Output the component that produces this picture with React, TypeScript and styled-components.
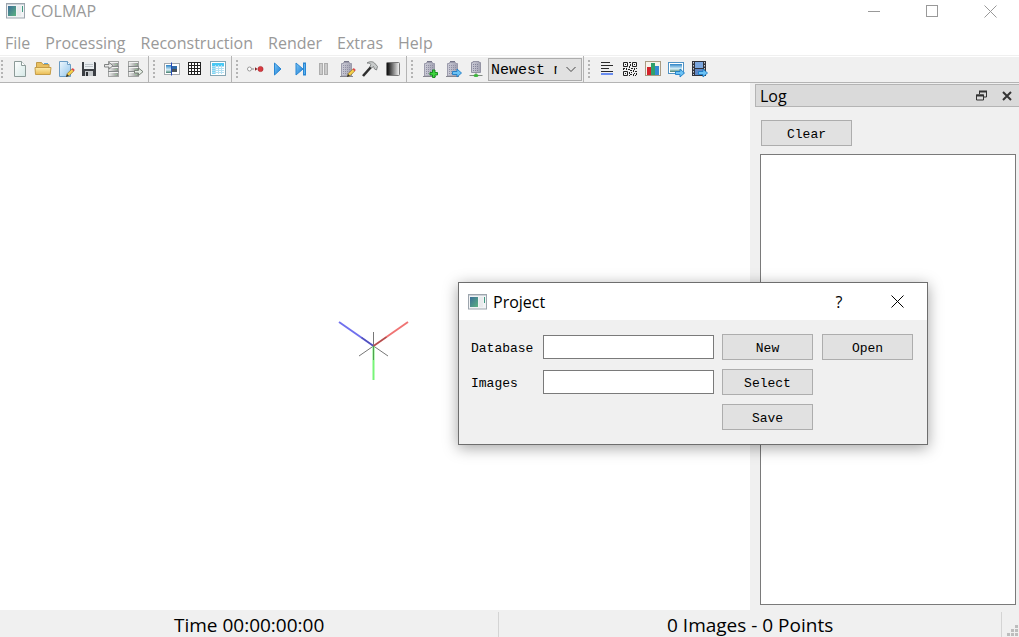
import React from "react";
import styled, { createGlobalStyle } from "styled-components";

const UI = `"Open Sans", "Noto Sans", sans-serif`;
const MONO = `"Liberation Mono", monospace`;

const GlobalStyle = createGlobalStyle`
  * { box-sizing: border-box; }
  html, body { margin: 0; padding: 0; background: #fff; }
  body { font-family: ${UI}; color: #000; }
  button, input, textarea, select { font: inherit; color: inherit; margin: 0; }
  svg { display: block; }
`;

const Window = styled.div`
  min-height: 100vh;
  display: flex;
  flex-direction: column;
  background: #fff;
`;

const TitleBar = styled.header`
  display: flex;
  align-items: center;
  height: 22px;
  margin-bottom: 10px;
  padding-left: 6px;
  gap: 6px;
  color: #999;
`;

const Title = styled.h1`
  flex: 1;
  margin: 0;
  font: 400 16px/22px ${UI};
`;

const CaptionGroup = styled.div`
  display: flex;
  align-self: stretch;
`;

const CaptionButton = styled.button`
  width: 58px;
  padding: 0;
  border: 0;
  background: none;
  display: flex;
  align-items: center;
  justify-content: center;
  font-size: 16px;
`;

const MenuBar = styled.nav`
  display: flex;
  gap: 15px;
  height: 23px;
  padding-left: 5px;
  color: #999;
`;

const MenuItem = styled.button`
  padding: 0;
  border: 0;
  background: none;
  font-size: 16px;
  line-height: 23px;
`;

const ToolArea = styled.div`
  display: flex;
  height: 28px;
  border-top: 1px solid #f0f0f0;
  border-bottom: 1px solid #b4b4b4;
  background: #f0f0f0;
  box-shadow: inset 0 1px #fff;
`;

const ToolGroup = styled.div<{ $first?: boolean; $last?: boolean }>`
  display: flex;
  align-items: center;
  padding: 0 2px 0 ${(p) => (p.$first ? 1 : 4)}px;
  border-right: ${(p) => (p.$last ? "0" : "1px solid #b4b4b4")};
`;

const Handle = styled.span`
  width: 7px;
  height: 18px;
  background:
    linear-gradient(#b4b4b4, #b4b4b4) 0 0 / 2px 18px no-repeat;
  mask: repeating-linear-gradient(#000 0 2px, transparent 2px 4px);
`;

const ToolButton = styled.button`
  width: 23px;
  height: 24px;
  padding: 0;
  border: 0;
  background: none;
  display: flex;
  align-items: center;
  justify-content: center;
`;

const ModelPicker = styled.label`
  position: relative;
  margin: 1px -1px 0 1px;
  svg {
    position: absolute;
    right: 6px;
    top: 8px;
    pointer-events: none;
  }
`;

const ModelSelect = styled.select`
  display: block;
  appearance: none;
  width: 94px;
  height: 23px;
  padding: 2px 24px 0 2px;
  border: 1px solid #adadad;
  border-radius: 0;
  background: #e1e1e1;
  font: 15px/19px ${MONO};
  text-overflow: clip;
`;

const Main = styled.main`
  flex: 1;
  display: flex;
`;

const Canvas = styled.section`
  flex: 1;
  display: flex;
  align-items: center;
  justify-content: center;
`;

const Dock = styled.aside`
  width: 269px;
  display: flex;
  flex-direction: column;
  padding: 1px 0 5px 5px;
  background: #f0f0f0;
`;

const DockTitle = styled.div`
  display: flex;
  align-items: center;
  height: 23px;
  padding-left: 4px;
  border: 1px solid #b4b4b4;
  border-right: 0;
  background: #dadada;
`;

const DockHeading = styled.h2`
  flex: 1;
  margin: 0;
  font: 400 16px/24px ${UI};
`;

const DockButton = styled.button`
  width: 25px;
  height: 20px;
  padding: 0;
  border: 0;
  background: none;
  display: flex;
  align-items: center;
  justify-content: center;
`;

const DockBody = styled.div`
  flex: 1;
  display: flex;
  flex-direction: column;
  align-items: flex-start;
  gap: 8px;
  padding: 13px 3px 0 5px;
`;

const PushButton = styled.button<{ $indent?: boolean }>`
  width: 91px;
  height: 26px;
  margin-left: ${(p) => (p.$indent ? 1 : 0)}px;
  padding: 4px 0 0;
  border: 1px solid #adadad;
  background: #e1e1e1;
  font: 13px/20px ${MONO};
`;

const LogText = styled.textarea`
  flex: 1;
  width: 100%;
  border: 1px solid #7a7a7a;
  background: #fff;
  resize: none;
  outline: 0;
  font: 13px/16px ${MONO};
`;

const StatusBar = styled.footer`
  display: flex;
  height: 27px;
  padding-top: 2px;
  background: #f0f0f0;
`;

const StatusCell = styled.div<{ $basis?: string }>`
  flex: ${(p) => (p.$basis ? `0 0 ${p.$basis}` : "1")};
  border-right: 1px solid #d4d4d4;
  text-align: center;
  font-size: 19px;
  line-height: 26px;
`;

const Grip = styled.div`
  width: 17px;
  display: flex;
  align-items: flex-end;
  justify-content: flex-end;
`;

const DialogWindow = styled.div`
  position: absolute;
  left: 458px;
  top: 282px;
  border: 1px solid #6e6e6e;
  background: #f0f0f0;
  box-shadow: 0 3px 14px rgba(0, 0, 0, 0.36);
`;

const DialogTitle = styled.div`
  display: flex;
  align-items: center;
  height: 37px;
  padding: 0 1px 0 9px;
  gap: 6px;
  background: #fff;
`;

const DialogHeading = styled.h2`
  flex: 1;
  margin: 0;
  font: 400 16px/22px ${UI};
`;

const ProjectForm = styled.form`
  display: grid;
  grid-template-columns: 64px 171px 92px 91px;
  gap: 9px 8px;
  align-items: center;
  padding: 14px 14px 14px 12px;
`;

const FieldLabel = styled.label`
  padding-top: 4px;
  font: 13px/20px ${MONO};
`;

const TextBox = styled.input`
  width: 100%;
  height: 24px;
  border: 1px solid #7a7a7a;
  background: #fff;
  padding: 0 4px;
  outline: 0;
  font: 13px/20px ${MONO};
`;

const SaveSlot = styled.div`
  grid-column: 3;
`;

const AppIcon = () => (
  <svg width="19" height="16" viewBox="0 0 19 16" aria-hidden="true">
    <rect x=".5" y=".5" width="18" height="14.5" fill="#f1f3f5" stroke="#9da5ad" />
    <rect x="2" y="3" width="8" height="10" fill="url(#appFill)" />
    <rect x="11" y="3" width="4" height="10" fill="#e9ebed" />
    <rect x="16" y="3" width="1" height="6" fill="#3f9a80" />
    <path d="M1 1.5H18" stroke="#cdd3d9" />
  </svg>
);

const Cross = () => (
  <svg width="13" height="13" viewBox="0 0 13 13" aria-hidden="true">
    <path d="M.5 .5l12 12M12.5 .5l-12 12" stroke="currentColor" fill="none" />
  </svg>
);

const Gradients = () => (
  <svg width="0" height="0" style={{ position: "absolute" }} aria-hidden="true">
    <defs>
      <linearGradient id="appFill" x1="0" y1="0" x2="1" y2="1">
        <stop offset="0" stopColor="#3a6c98" />
        <stop offset="1" stopColor="#5cb280" />
      </linearGradient>
      <linearGradient id="page" x1="0" y1="0" x2="1" y2="1">
        <stop offset="0" stopColor="#ffffff" />
        <stop offset="1" stopColor="#d5e8e6" />
      </linearGradient>
      <linearGradient id="bluePage" x1="0" y1="0" x2="1" y2="1">
        <stop offset="0" stopColor="#eef7fd" />
        <stop offset="1" stopColor="#93c6ec" />
      </linearGradient>
      <linearGradient id="folder" x1="0" y1="0" x2="0" y2="1">
        <stop offset="0" stopColor="#fdeeb0" />
        <stop offset="1" stopColor="#eabb52" />
      </linearGradient>
      <linearGradient id="metal" x1="0" y1="0" x2="1" y2="0">
        <stop offset="0" stopColor="#efefef" />
        <stop offset="1" stopColor="#868a88" />
      </linearGradient>
      <linearGradient id="play" x1="0" y1="0" x2="1" y2="1">
        <stop offset="0" stopColor="#7cc8f8" />
        <stop offset="1" stopColor="#1779d2" />
      </linearGradient>
      <linearGradient id="shade" x1="0" y1="0" x2="1" y2="0">
        <stop offset="0.1" stopColor="#161616" />
        <stop offset="1" stopColor="#fafafa" />
      </linearGradient>
      <linearGradient id="sky" x1="0" y1="0" x2="0" y2="1">
        <stop offset="0" stopColor="#2b83c6" />
        <stop offset=".6" stopColor="#d8f0f8" />
        <stop offset="1" stopColor="#407e6c" />
      </linearGradient>
      <linearGradient id="wall" x1="0" y1="0" x2="1" y2="0">
        <stop offset="0" stopColor="#cdcdd8" />
        <stop offset="1" stopColor="#a2a2b2" />
      </linearGradient>
    </defs>
  </svg>
);

const Icon = ({ children }: { children: React.ReactNode }) => (
  <svg width="18" height="18" viewBox="0 0 18 18" fill="none" aria-hidden="true">
    {children}
  </svg>
);

const Pencil = () => (
  <g>
    <path d="M9.5 16.5l.8-3 4.6-4.6 2 2-4.6 4.6z" fill="#f6cf4a" stroke="#806018" strokeWidth=".6" />
    <path d="M14.6 9.2l1.2-1.2 2 2-1.2 1.2z" fill="#e0474c" />
    <path d="M9 17l1-3 1.8 1.8z" fill="#333" />
  </g>
);

const Stack = () => (
  <g>
    <rect x="5.5" y="1.5" width="10" height="15" fill="url(#metal)" stroke="#a2a4a3" />
    <path d="M5 6.5h11M5 11.5h11" stroke="#85898a" />
    <path d="M6 7.5h9M6 12.5h9M6 2.5h9" stroke="#f2f2f2" />
    <path d="M12 4.5h2M12 9.5h2M12 14.5h2" stroke="#9cc49c" />
  </g>
);

const Building = () => (
  <g>
    <path d="M3.5 16V3.5h2v-1h6v1h2V16z" fill="url(#wall)" stroke="#9c9cac" />
    <path d="M6 1.5h5" stroke="#77778a" />
    <path d="M5 5.5h7M5 7.5h7M5 9.5h7M5 11.5h7M5 13.5h7" stroke="#9090a4" strokeDasharray="1 1" />
    <path d="M2 16.5h13" stroke="#85858f" />
  </g>
);

const BlueArrow = () => (
  <path d="M8.5 11.5h4.5V9l4.5 4-4.5 4v-2.5H8.5z" fill="#6cc2f4" stroke="#1c7cc6" strokeWidth=".9" />
);

const icons: Record<string, React.ReactNode> = {
  newProject: (
    <>
      <path d="M3.5 1.5h7l4 4v11h-11z" fill="url(#page)" stroke="#8c9b98" />
      <path d="M10.5 1.5v4h4" fill="#fff" stroke="#8c9b98" />
    </>
  ),
  open: (
    <>
      <path d="M2.5 14.5v-12h5l1.5 2h6v10z" fill="#e8bf60" stroke="#c19a48" />
      <path d="M10 3.5h4" stroke="#5da5db" />
      <path d="M1.5 14.5l-.5-7h16l-.8 7z" fill="url(#folder)" stroke="#c59d48" />
    </>
  ),
  edit: (
    <>
      <path d="M2.5 1.5h8l3 3v12h-11z" fill="url(#bluePage)" stroke="#6b9cc4" />
      <path d="M10.5 1.5v3h3" fill="#fff" stroke="#6b9cc4" />
      <Pencil />
    </>
  ),
  save: (
    <>
      <path d="M2 2h13l1 1v13H2z" fill="#3c3f44" />
      <rect x="4" y="2" width="10" height="7" fill="#e9edf0" />
      <path d="M5 4.5h8M5 6.5h8" stroke="#bcc2c7" />
      <rect x="5" y="11" width="8" height="5" fill="#c6cacd" />
      <rect x="6" y="12" width="2" height="4" fill="#2f3236" />
    </>
  ),
  importModel: (
    <>
      <Stack />
      <path d="M1.5 7V4.500h4.500V2.400l4 3.300-4 3.400V7z" fill="#e9e9e9" stroke="#808382" />
    </>
  ),
  exportModel: (
    <>
      <g transform="translate(-3 0)"><Stack /></g>
      <path d="M8.500 13v-2.600h4V8l4.500 3.700-4.500 3.800V13z" fill="#e4ece4" stroke="#768076" />
    </>
  ),
  extraction: (
    <>
      <rect x="1.500" y="3.500" width="15" height="11" fill="#fff" stroke="#a3a8ad" />
      <rect x="3" y="5" width="5" height="8" fill="url(#sky)" />
      <rect x="9" y="6" width="5" height="3" fill="#2f6aa8" />
      <rect x="9" y="9" width="5" height="3" fill="#4a5258" />
      <path d="M8.500 2.500v13" stroke="#2348b8" />
    </>
  ),
  matching: (
    <>
      <rect x="2" y="2" width="13" height="13" fill="#fff" />
      <path d="M2.500 2v13M5.500 2v13M8.500 2v13M11.500 2v13M14.500 2v13M2 2.500h13M2 5.500h13M2 8.500h13M2 11.500h13M2 14.500h13" stroke="#222" />
    </>
  ),
  database: (
    <>
      <rect x="1.500" y="1.500" width="15" height="14" fill="#fff" stroke="#85a5b3" />
      <rect x="3" y="3" width="12" height="3" fill="#48c8f4" />
      <rect x="3" y="6" width="3" height="8" fill="#7ad6f6" />
      <path d="M3 6.500h12M3 8.500h12M3 10.500h12M3 12.500h12M6.500 5v9M9.500 5v9M12.500 5v9" stroke="#b4e0f2" />
    </>
  ),
  auto: (
    <>
      <circle cx="3.500" cy="9" r="2" fill="#fff" stroke="#999" />
      <path d="M6 9h2" stroke="#888" />
      <path d="M9 7.200l2.500 1.800-2.500 1.800z" fill="#7f2020" />
      <circle cx="14.500" cy="9" r="2.600" fill="#d83a40" stroke="#a7282d" strokeWidth=".6" />
    </>
  ),
  start: <path d="M5.500 3l6.500 6-6.500 6z" fill="url(#play)" stroke="#2a86d2" />,
  step: (
    <>
      <path d="M4 3l7 6-7 6z" fill="url(#play)" stroke="#2a86d2" />
      <rect x="11.500" y="3" width="2" height="12" fill="#5bb2ef" stroke="#2a86d2" />
    </>
  ),
  pause: (
    <>
      <rect x="4.500" y="3.500" width="3" height="11" fill="#cacaca" stroke="#adadad" />
      <rect x="9.500" y="3.500" width="3" height="11" fill="#cacaca" stroke="#adadad" />
    </>
  ),
  options: (
    <>
      <Building />
      <Pencil />
    </>
  ),
  adjust: (
    <>
      <path d="M2 16l8-9" stroke="#2e2e2e" strokeWidth="2.600" />
      <path d="M6 3c3-2 6-1.500 7.500 0l3 3.500-1 3.500-2-1-1-2.500-2 1.500-1.500-1.500 1-2C9 3.500 8 3 6 3z" fill="#c8cbcb" stroke="#707474" strokeWidth=".8" />
    </>
  ),
  dense: <rect x="2.500" y="2.500" width="13" height="13" rx="1" fill="url(#shade)" stroke="#777" />,
  addBuilding: (
    <>
      <Building />
      <path d="M11.500 10h2.500v2.500h2.500V15H14v2.500h-2.500V15H9v-2.500h2.500z" fill="#3fd53f" stroke="#11831b" strokeWidth=".9" />
    </>
  ),
  movie: (
    <>
      <Building />
      <BlueArrow />
    </>
  ),
  network: (
    <>
      <path d="M4.500 12.500v-10h1.500v-1h6v1h1.500v10z" fill="url(#wall)" stroke="#9494a4" />
      <path d="M6 4.500h6M6 6.500h6M6 8.500h6M6 10.500h6" stroke="#85859a" strokeDasharray="1 1" />
      <path d="M9 12.500v3M2.500 15.500h13" stroke="#838a83" />
      <ellipse cx="9" cy="15.500" rx="2.500" ry="1.600" fill="#3cb43c" />
    </>
  ),
  logView: (
    <>
      <path d="M3 2.500h9M3 5.500h12M3 8.500h8M3 11.500h12" stroke="#2b2b2b" />
      <rect x="3" y="13" width="12" height="2" fill="#6a8df0" />
    </>
  ),
  matchMatrix: (
    <>
      <path d="M2.500 2.500h4v4h-4zM11.500 2.500h4v4h-4zM2.500 11.500h4v4h-4z" stroke="#222" />
      <path d="M4 4h1v1H4zM13 4h1v1h-1zM4 13h1v1H4zM8 2h2v1H8zM9 4h1v2H9zM8 6h1v2H8zM2 8h2v1H2zM5 8h1v2H5zM7 9h2v1H7zM10 8h2v1h-2zM13 8h1v2h-1zM15 8h1v1h-1zM2 9h1v1H2zM9 10h2v1H9zM12 10h1v2h-1zM14 11h2v1h-2zM8 12h1v2H8zM10 12h1v1h-1zM13 13h1v1h-1zM15 13h1v2h-1zM9 14h2v1H9zM12 14h1v2h-1zM8 15h1v1H8zM14 15h1v1h-1z" fill="#222" />
    </>
  ),
  statistics: (
    <>
      <rect x="1.500" y="1.500" width="15" height="14" fill="#f7f3ea" stroke="#a89a82" />
      <rect x="3" y="7" width="4" height="8" fill="#d3222b" />
      <rect x="7" y="3" width="4" height="12" fill="#2fa06c" />
      <rect x="11" y="6" width="4" height="9" fill="#3389d2" />
    </>
  ),
  grabImage: (
    <>
      <rect x="1.500" y="2.500" width="15" height="11" fill="#fff" stroke="#4f92c4" />
      <rect x="3" y="4" width="12" height="8" fill="url(#sky)" />
      <BlueArrow />
    </>
  ),
  grabMovie: (
    <>
      <rect x="2" y="1" width="14" height="15" fill="#31333b" />
      <path d="M3.500 2v13M14.500 2v13" stroke="#c8ccd4" strokeDasharray="1.500 1.500" />
      <rect x="5" y="2" width="8" height="6" fill="#7ba6de" />
      <rect x="5" y="9" width="8" height="6" fill="#5d86c4" />
      <BlueArrow />
    </>
  ),
};

const Tool = ({ name, label }: { name: string; label: string }) => (
  <ToolButton type="button" aria-label={label}>
    <Icon>{icons[name]}</Icon>
  </ToolButton>
);

const groups: [string, string][][] = [
  [
    ["newProject", "New project"],
    ["open", "Open project"],
    ["edit", "Edit project"],
    ["save", "Save project"],
    ["importModel", "Import model"],
    ["exportModel", "Export model"],
  ],
  [
    ["extraction", "Feature extraction"],
    ["matching", "Feature matching"],
    ["database", "Database management"],
  ],
  [
    ["auto", "Automatic reconstruction"],
    ["start", "Start reconstruction"],
    ["step", "Reconstruct next image"],
    ["pause", "Pause reconstruction"],
    ["options", "Reconstruction options"],
    ["adjust", "Bundle adjustment"],
    ["dense", "Dense reconstruction"],
  ],
  [
    ["addBuilding", "Render"],
    ["movie", "Render now"],
    ["network", "Render options"],
  ],
  [
    ["logView", "Show log"],
    ["matchMatrix", "Match matrix"],
    ["statistics", "Model statistics"],
    ["grabImage", "Grab image"],
    ["grabMovie", "Grab movie"],
  ],
];

const menus = ["File", "Processing", "Reconstruction", "Render", "Extras", "Help"];

export default function App() {
  return (
    <Window>
      <GlobalStyle />
      <Gradients />
      <TitleBar>
        <AppIcon />
        <Title>COLMAP</Title>
        <CaptionGroup>
          <CaptionButton type="button" aria-label="Minimize">
            <svg width="12" height="1" aria-hidden="true"><path d="M0 .5h12" stroke="currentColor" /></svg>
          </CaptionButton>
          <CaptionButton type="button" aria-label="Maximize">
            <svg width="12" height="12" aria-hidden="true"><rect x=".5" y=".5" width="11" height="11" fill="none" stroke="currentColor" /></svg>
          </CaptionButton>
          <CaptionButton type="button" aria-label="Close"><Cross /></CaptionButton>
        </CaptionGroup>
      </TitleBar>
      <MenuBar>
        {menus.map((m) => <MenuItem type="button" key={m}>{m}</MenuItem>)}
      </MenuBar>
      <ToolArea>
        {groups.map((tools, i) => (
          <ToolGroup key={i} $first={i === 0} $last={i === groups.length - 1}>
            <Handle />
            {tools.map(([name, label]) => <Tool key={name} name={name} label={label} />)}
            {i === 3 && (
              <ModelPicker>
                <ModelSelect aria-label="Model">
                  <option>Newest model</option>
                </ModelSelect>
                <svg width="10" height="7" aria-hidden="true"><path d="M.5 1l4.500 4.500L9.500 1" fill="none" stroke="#444" /></svg>
              </ModelPicker>
            )}
          </ToolGroup>
        ))}
      </ToolArea>
      <Main>
        <Canvas aria-label="Model viewer">
          <svg width="77" height="69" viewBox="0 0 77 69" aria-hidden="true" fill="none">
            <path d="M36.500 20v28M36.500 34L22 44M36.500 34l14.500 10" stroke="#777" />
            <path d="M36.500 34L2 10" stroke="#7070ee" strokeWidth="2" />
            <path d="M36.500 34L71 10" stroke="#f07474" strokeWidth="2" />
            <path d="M36.500 34v34" stroke="#78f478" strokeWidth="2" />
            <path d="M36.500 34l-12-8.500" stroke="#5050b4" strokeWidth="1.500" />
            <path d="M36.500 34l13-9" stroke="#a85050" strokeWidth="1.500" />
            <path d="M36.500 34v14" stroke="#50a050" />
          </svg>
        </Canvas>
        <Dock>
          <DockTitle>
            <DockHeading>Log</DockHeading>
            <DockButton type="button" aria-label="Float">
              <svg width="11" height="11" viewBox="0 0 11 11" fill="none" aria-hidden="true">
                <path d="M3.500 4V1.500h7v5.500H8" stroke="#333" />
                <path d="M3 1.500h8M0 5.500h8" stroke="#333" strokeWidth="2" />
                <path d="M.5 5v5h7V5z" stroke="#333" />
              </svg>
            </DockButton>
            <DockButton type="button" aria-label="Close log">
              <svg width="10" height="10" viewBox="0 0 10 10" aria-hidden="true"><path d="M1 1l8 8M9 1L1 9" stroke="#333" strokeWidth="2" /></svg>
            </DockButton>
          </DockTitle>
          <DockBody>
            <PushButton type="button" $indent>Clear</PushButton>
            <LogText aria-label="Log output" readOnly />
          </DockBody>
        </Dock>
      </Main>
      <StatusBar>
        <StatusCell $basis="49%">Time 00:00:00:00</StatusCell>
        <StatusCell>0 Images - 0 Points</StatusCell>
        <Grip>
          <svg width="12" height="12" aria-hidden="true">
            <path d="M8 0h3v3H8zM4 4h3v3H4zM8 4h3v3H8zM0 8h3v3H0zM4 8h3v3H4zM8 8h3v3H8z" fill="#bdbdbd" />
          </svg>
        </Grip>
      </StatusBar>
      <DialogWindow role="dialog" aria-labelledby="project-title">
        <DialogTitle>
          <AppIcon />
          <DialogHeading id="project-title">Project</DialogHeading>
          <CaptionGroup>
            <CaptionButton type="button" aria-label="Help">?</CaptionButton>
            <CaptionButton type="button" aria-label="Close dialog"><Cross /></CaptionButton>
          </CaptionGroup>
        </DialogTitle>
        <ProjectForm onSubmit={(e) => e.preventDefault()}>
          <FieldLabel htmlFor="database">Database</FieldLabel>
          <TextBox id="database" type="text" />
          <PushButton type="button">New</PushButton>
          <PushButton type="button">Open</PushButton>
          <FieldLabel htmlFor="images">Images</FieldLabel>
          <TextBox id="images" type="text" />
          <PushButton type="button">Select</PushButton>
          <span />
          <SaveSlot>
            <PushButton type="submit">Save</PushButton>
          </SaveSlot>
        </ProjectForm>
      </DialogWindow>
    </Window>
  );
}
